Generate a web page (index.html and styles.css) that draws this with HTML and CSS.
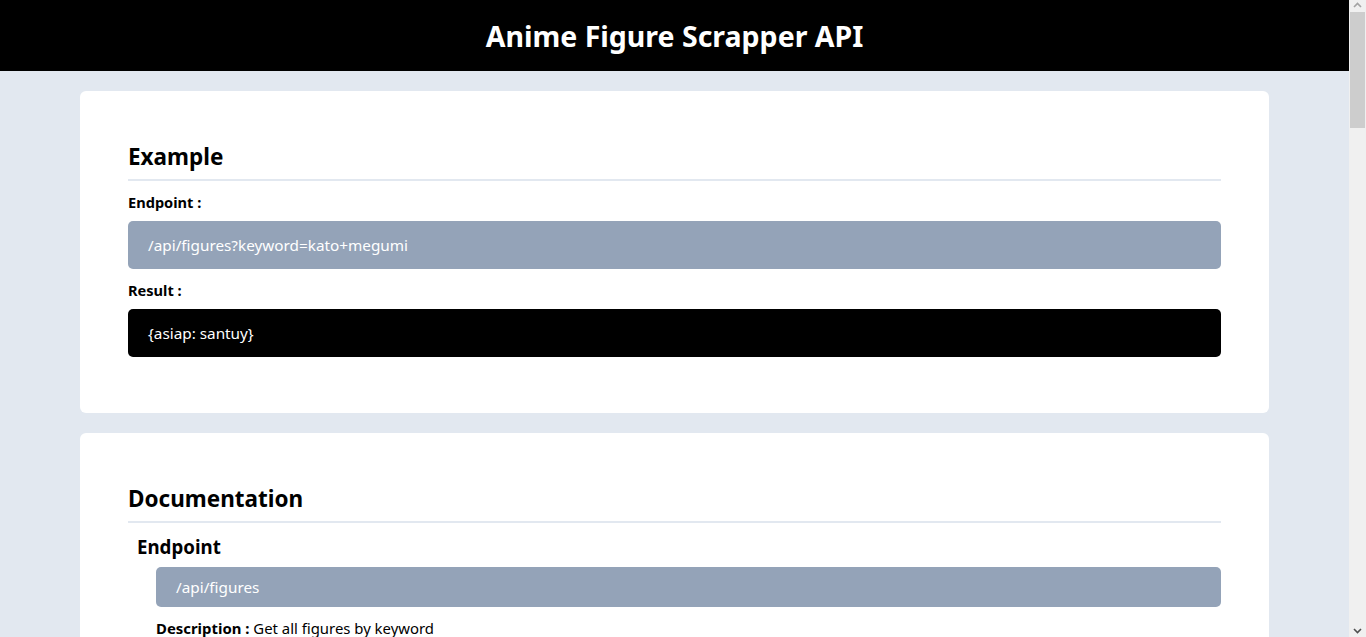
FILE: index.html
```html
<!DOCTYPE html>
<html lang="en">
<head>
<meta charset="utf-8">
<title>Anime Figure Scrapper API</title>
<link rel="stylesheet" href="styles.css">
</head>
<body>
<header class="topbar">
  <h1 class="title">Anime Figure Scrapper API</h1>
</header>
<main class="page">
  <section class="card">
    <h2 class="card-title">Example</h2>
    <p class="label">Endpoint :</p>
    <div class="code code-muted">/api/figures?keyword=kato+megumi</div>
    <p class="label">Result :</p>
    <div class="code code-dark">{asiap: santuy}</div>
  </section>
  <section class="card">
    <h2 class="card-title">Documentation</h2>
    <h3 class="sub-title">Endpoint</h3>
    <div class="doc-body">
      <div class="code code-muted code-small">/api/figures</div>
      <p class="desc"><strong>Description :</strong> Get all figures by keyword</p>
      <p class="desc"><strong>Parameters :</strong></p>
      <div class="code code-dark code-small">keyword : string</div>
      <p class="desc"><strong>Example :</strong> /api/figures?keyword=kato+megumi</p>
    </div>
  </section>
</main>
<div class="scrollbar" aria-hidden="true">
  <svg class="sb-arrow" width="17" height="12" viewBox="0 0 17 12"><path d="M5 7 L8.5 3.5 L12 7" fill="none" stroke="#a3a3a3" stroke-width="1.6"/></svg>
  <div class="sb-thumb"></div>
  <div class="sb-track"></div>
  <svg class="sb-arrow" width="17" height="12" viewBox="0 0 17 12"><path d="M5 4 L8.5 7.5 L12 4" fill="none" stroke="#505050" stroke-width="1.6"/></svg>
</div>
</body>
</html>
```
FILE: styles.css
```css
* { box-sizing: border-box; }
html, body { margin: 0; padding: 0; }
body {
  background: #e2e8f0;
  font-family: "Noto Sans", "Open Sans", sans-serif;
  color: #000;
  font-size: 15.3px;
  line-height: 24px;
  padding-right: 17px;
}
.topbar {
  background: #000;
  height: 71px;
  display: flex;
  align-items: center;
  justify-content: center;
}
.title {
  margin: 0;
  color: #fff;
  font-size: 28.5px;
  line-height: 36px;
  font-weight: 700;
}
.page {
  padding: 20px 80px;
  display: flex;
  flex-direction: column;
  gap: 20px;
}
.card {
  background: #fff;
  border-radius: 6px;
  padding: 50px 48px 56px;
}
.card-title {
  margin: 0;
  font-size: 22.5px;
  line-height: 32px;
  font-weight: 700;
  padding-bottom: 6px;
  border-bottom: 2px solid #e2e8f0;
}
.label {
  margin: 9px 0 7px;
  font-weight: 700;
  font-size: 14.6px;
}
.code {
  border-radius: 5px;
  color: #fff;
  padding: 12px 20px;
  line-height: 24px;
}
.code-muted { background: #94a3b8; }
.code-dark { background: #000; }
.code-small { padding: 8px 20px; }
.sub-title {
  margin: 10px 0 6px 9px;
  font-size: 18.7px;
  line-height: 28px;
  font-weight: 700;
}
.doc-body {
  padding-left: 28px;
}
.desc {
  margin: 9px 0;
  font-size: 14.9px;
}
.scrollbar {
  position: fixed;
  top: 0;
  right: 0;
  width: 17px;
  height: 100vh;
  background: #f0f0f0;
  display: flex;
  flex-direction: column;
}
.sb-arrow { flex: none; display: block; }
.sb-thumb {
  flex: none;
  height: 116px;
  margin: 0 1px;
  background: #cdcdcd;
}
.sb-track { flex: 1; }
```
